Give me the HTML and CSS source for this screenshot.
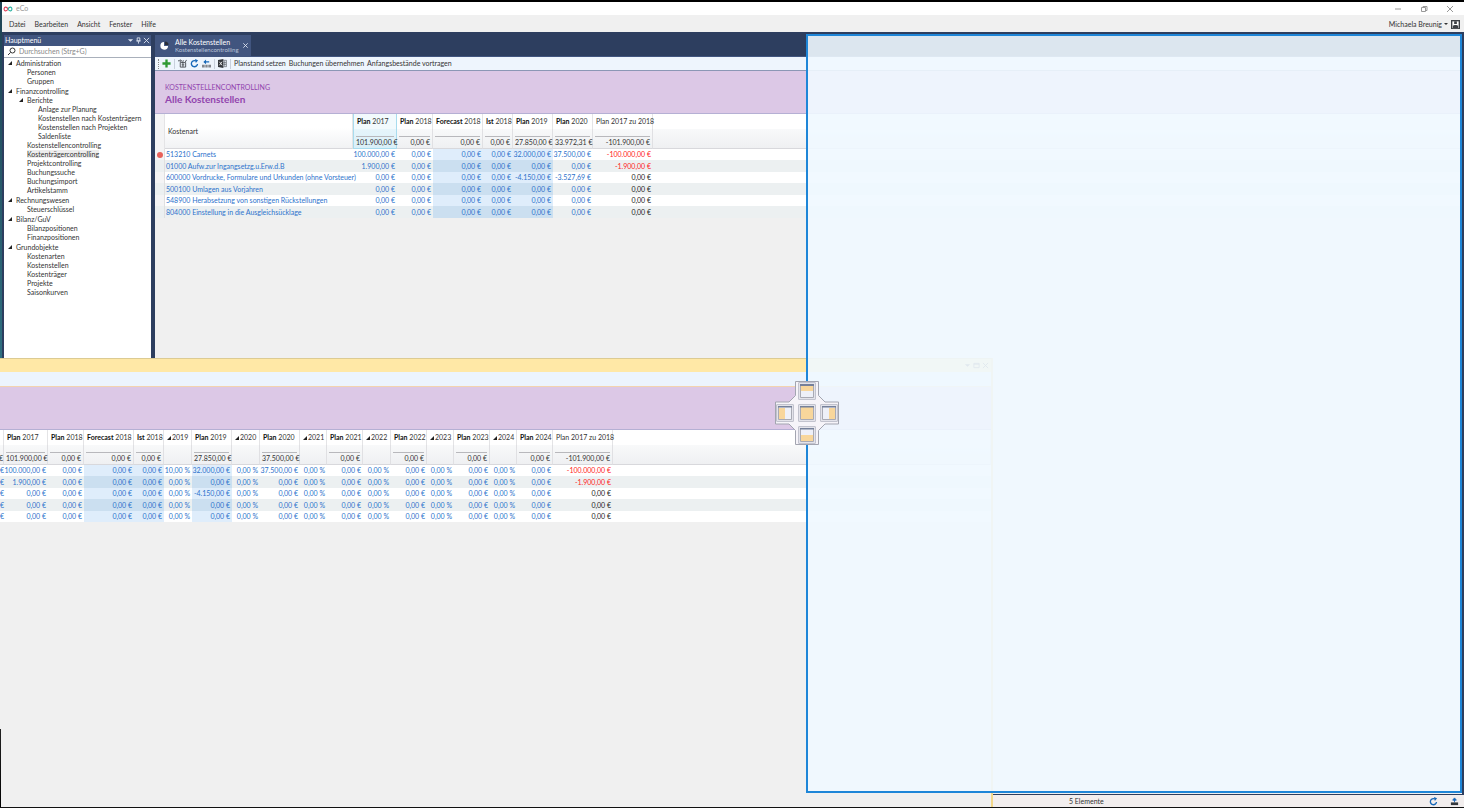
FILE: index.html
```html
<!DOCTYPE html>
<html lang="de">
<head>
<meta charset="utf-8">
<title>eCo</title>
<link rel="stylesheet" href="styles.css">
</head>
<body>
<div class="desktop">
<div class="app">
  <header class="titlebar">
    <svg class="logo" viewBox="0 0 18 10"><path d="M9 5C7 1 2 0 2 5s5 4 7 0" fill="none" stroke="#e0405a" stroke-width="2"/><path d="M9 5c2-4 7-5 7 0s-5 4-7 0" fill="none" stroke="#2bb3a3" stroke-width="2"/></svg>
    <span class="app-name">eCo</span>
    <div class="window-buttons">
      <button aria-label="Minimieren"><svg viewBox="0 0 8 8"><path d="M1 4h6"/></svg></button>
      <button aria-label="Wiederherstellen"><svg viewBox="0 0 8 8"><path d="M1.500 2.500h4v4h-4zM3 2.500v-1h4v4h-1.500"/></svg></button>
      <button aria-label="Schließen"><svg viewBox="0 0 8 8"><path d="M1 1l6 6M7 1l-6 6"/></svg></button>
    </div>
  </header>
  <nav class="menubar">
    <button>Datei</button><button>Bearbeiten</button><button>Ansicht</button><button>Fenster</button><button>Hilfe</button>
    <button class="user">Michaela Breunig <i class="caret"></i></button>
    <svg class="avatar" viewBox="0 0 10 10"><path d="M0 0h10v10H0z" fill="#3c3f44"/><path d="M1.500 9V1.500h7V9z" fill="#fff"/><path d="M3.500 1.500h3v3h-3zM2 9V6.500l2-1h2l2 1V9z" fill="#3c3f44"/></svg>
  </nav>
  <div class="workspace">
    <aside class="sidebar">
      <div class="panel-head"><span>Hauptmenü</span>
        <button aria-label="Optionen"><svg viewBox="0 0 8 8"><path d="M1 2.500h6L4 5.500z" fill="#dfe6f2" stroke="none"/></svg></button>
        <button aria-label="Anheften"><svg viewBox="0 0 8 8"><path d="M2.500 1h3v3.500h-3zM1.500 4.500h5M4 5v2.500"/></svg></button>
        <button aria-label="Schließen"><svg viewBox="0 0 8 8"><path d="M1 1l6 6M7 1l-6 6"/></svg></button>
      </div>
      <label class="search"><svg viewBox="0 0 9 9"><circle cx="5.500" cy="3.500" r="2.500"/><path d="M3.500 5.500L1 8"/></svg><input type="text" placeholder="Durchsuchen (Strg+G)" aria-label="Durchsuchen"></label>
      <ul class="tree">
        <li><span class="open">Administration</span><ul><li>Personen</li><li>Gruppen</li></ul></li>
        <li><span class="open">Finanzcontrolling</span><ul>
          <li><span class="open">Berichte</span><ul><li>Anlage zur Planung</li><li>Kostenstellen nach Kostenträgern</li><li>Kostenstellen nach Projekten</li><li>Saldenliste</li></ul></li>
          <li>Kostenstellencontrolling</li><li><span class="selected">Kostenträgercontrolling</span></li><li>Projektcontrolling</li><li>Buchungssuche</li><li>Buchungsimport</li><li>Artikelstamm</li></ul></li>
        <li><span class="open">Rechnungswesen</span><ul><li>Steuerschlüssel</li></ul></li>
        <li><span class="open">Bilanz/GuV</span><ul><li>Bilanzpositionen</li><li>Finanzpositionen</li></ul></li>
        <li><span class="open">Grundobjekte</span><ul><li>Kostenarten</li><li>Kostenstellen</li><li>Kostenträger</li><li>Projekte</li><li>Saisonkurven</li></ul></li>
      </ul>
    </aside>
    <main class="document">
      <div class="tabs">
        <div class="tab">
          <svg class="pie" viewBox="0 0 10 10"><path d="M4.500 1A4.300 4.300 0 1 0 9 5.500H4.500z" fill="#fff"/><path d="M5.500 .500A4 4 0 0 1 9.500 4.500h-4z" fill="#2b2f38"/></svg>
          <div class="tab-text"><strong>Alle Kostenstellen</strong><span>Kostenstellencontrolling</span></div>
          <button aria-label="Tab schließen"><svg viewBox="0 0 8 8"><path d="M1.500 1.500l5 5M6.500 1.500l-5 5"/></svg></button>
        </div>
      </div>
      <div class="toolbar">
        <i class="grip"></i>
        <button aria-label="Neu"><svg viewBox="0 0 10 10"><path d="M5 .500v9M.500 5h9" stroke="#2f9a35" stroke-width="2.600"/></svg></button>
        <i class="sep"></i>
        <button aria-label="Objekte"><svg viewBox="0 0 10 10"><path d="M2.500 4h6v5h-6zM0 2h3.500M2.500 .500l1.500 1.500-1.500 1.500M5 4l1-2.500M9.500 1L8 3.500M4 6.500h3M5.500 4v5" fill="none" stroke="#45494f"/></svg></button>
        <button aria-label="Aktualisieren"><svg viewBox="0 0 10 10"><path d="M8.300 5.500A3.400 3.400 0 1 1 6.500 2.200" fill="none" stroke="#1768b8" stroke-width="1.500"/><path d="M5.500 0l3.500 1.500L6.500 4.500z" fill="#1768b8"/></svg></button>
        <button aria-label="Vortragen"><svg viewBox="0 0 10 10"><path d="M4 2.500h4v1.500H4zM1.500 3.200L4.500 .500v5.200z" fill="#1768b8"/><path d="M0 6.500h3v3H0zM3.700 6.500h2.600v3H3.700zM7 6.500h3v3H7z" fill="#82868d"/></svg></button>
        <i class="sep"></i>
        <button aria-label="Excel-Export"><svg viewBox="0 0 10 10"><path d="M0 1l6-1v10L0 9z" fill="#34383d"/><path d="M6 1.500h3.500v7H6M7.500 2v6M6 4h3M6 6h3" fill="none" stroke="#555a60" stroke-width=".700"/><path d="M1.500 3l3 4M4.500 3l-3 4" stroke="#fff" stroke-width=".900"/></svg></button>
        <i class="sep"></i>
        <button>Planstand setzen</button><button>Buchungen übernehmen</button><button>Anfangsbestände vortragen</button>
      </div>
      <div class="banner"><p>KOSTENSTELLENCONTROLLING</p><h1>Alle Kostenstellen</h1></div>
      <table class="grid">
        <colgroup><col class="w-mark"><col class="w-name"><col class="w-total"><col class="w-plan"><col class="w-fore"><col class="w-ist"><col class="w-mid"><col class="w-mid"><col class="w-diff"><col></colgroup>
        <thead>
          <tr class="labels"><th class="mark" rowspan="2"></th><th class="name" rowspan="2">Kostenart</th><th class="sorted"><b>Plan</b> 2017</th><th><b>Plan</b> 2018</th><th><b>Forecast</b> 2018</th><th><b>Ist</b> 2018</th><th><b>Plan</b> 2019</th><th><b>Plan</b> 2020</th><th>Plan 2017 zu 2018</th><th></th></tr>
          <tr class="sums"><td class="sorted"><span>101.900,00 €</span></td><td><span>0,00 €</span></td><td><span>0,00 €</span></td><td><span>0,00 €</span></td><td><span>27.850,00 €</span></td><td><span>33.972,31 €</span></td><td><span>-101.900,00 €</span></td><td></td></tr>
        </thead>
        <tbody>
          <tr><td class="mark"><i class="dot"></i></td><td class="name">513210 Carnets</td><td>100.000,00 €</td><td>0,00 €</td><td class="hl">0,00 €</td><td class="hl">0,00 €</td><td class="hl">32.000,00 €</td><td>37.500,00 €</td><td class="neg">-100.000,00 €</td><td></td></tr>
          <tr><td class="mark"></td><td class="name">01000 Aufw.zur Ingangsetzg.u.Erw.d.B</td><td>1.900,00 €</td><td>0,00 €</td><td class="hl">0,00 €</td><td class="hl">0,00 €</td><td class="hl">0,00 €</td><td>0,00 €</td><td class="neg">-1.900,00 €</td><td></td></tr>
          <tr><td class="mark"></td><td class="name">600000 Vordrucke, Formulare und Urkunden (ohne Vorsteuer)</td><td>0,00 €</td><td>0,00 €</td><td class="hl">0,00 €</td><td class="hl">0,00 €</td><td class="hl">-4.150,00 €</td><td>-3.527,69 €</td><td class="zero">0,00 €</td><td></td></tr>
          <tr><td class="mark"></td><td class="name">500100 Umlagen aus Vorjahren</td><td>0,00 €</td><td>0,00 €</td><td class="hl">0,00 €</td><td class="hl">0,00 €</td><td class="hl">0,00 €</td><td>0,00 €</td><td class="zero">0,00 €</td><td></td></tr>
          <tr><td class="mark"></td><td class="name">548900 Herabsetzung von sonstigen Rückstellungen</td><td>0,00 €</td><td>0,00 €</td><td class="hl">0,00 €</td><td class="hl">0,00 €</td><td class="hl">0,00 €</td><td>0,00 €</td><td class="zero">0,00 €</td><td></td></tr>
          <tr><td class="mark"></td><td class="name">804000 Einstellung in die Ausgleichsücklage</td><td>0,00 €</td><td>0,00 €</td><td class="hl">0,00 €</td><td class="hl">0,00 €</td><td class="hl">0,00 €</td><td>0,00 €</td><td class="zero">0,00 €</td><td></td></tr>
        </tbody>
      </table>
    </main>
  </div>
  <footer class="statusbar"><span>5 Elemente</span>
    <button aria-label="Aktualisieren"><svg viewBox="0 0 10 10"><path d="M8.300 5.500A3.400 3.400 0 1 1 6.500 2.200" fill="none" stroke="#1768b8" stroke-width="1.500"/><path d="M5.500 0l3.500 1.500L6.500 4.500z" fill="#1768b8"/></svg></button>
    <button aria-label="Server"><svg viewBox="0 0 10 10"><path d="M5 6V3M3 3.500L5 1l2 2.500z" fill="#1768b8" stroke="#1768b8"/><path d="M1 6h8v3H1z" fill="#34383d"/></svg></button>
  </footer>
</div>

<section class="floating">
  <div class="float-title">
    <button aria-label="Optionen"><svg viewBox="0 0 8 8"><path d="M1 2.500h6L4 5.500z" fill="#555" stroke="none"/></svg></button>
    <button aria-label="Maximieren"><svg viewBox="0 0 8 8"><path d="M1 1.500h6v5H1zM1 2.500h6"/></svg></button>
    <button aria-label="Schließen"><svg viewBox="0 0 8 8"><path d="M1 1l6 6M7 1l-6 6"/></svg></button>
  </div>
  <div class="float-toolbar"></div>
  <div class="float-banner"></div>
  <table class="grid">
    <colgroup><col class="w-cut"><col class="w-total"><col class="w-plan"><col class="w-fore"><col class="w-ist"><col class="w-pct"><col class="w-mid"><col class="w-pct"><col class="w-mid"><col class="w-narrow"><col class="w-plan"><col class="w-pct"><col class="w-plan"><col class="w-narrow"><col class="w-plan"><col class="w-narrow"><col class="w-plan"><col class="w-diff"><col></colgroup>
    <thead>
      <tr class="labels"><th></th><th><b>Plan</b> 2017</th><th><b>Plan</b> 2018</th><th><b>Forecast</b> 2018</th><th><b>Ist</b> 2018</th><th><i class="delta"></i>2019</th><th><b>Plan</b> 2019</th><th><i class="delta"></i>2020</th><th><b>Plan</b> 2020</th><th><i class="delta"></i>2021</th><th><b>Plan</b> 2021</th><th><i class="delta"></i>2022</th><th><b>Plan</b> 2022</th><th><i class="delta"></i>2023</th><th><b>Plan</b> 2023</th><th><i class="delta"></i>2024</th><th><b>Plan</b> 2024</th><th>Plan 2017 zu 2018</th><th></th></tr>
      <tr class="sums"><td class="cut">€</td><td><span>101.900,00 €</span></td><td><span>0,00 €</span></td><td><span>0,00 €</span></td><td><span>0,00 €</span></td><td></td><td><span>27.850,00 €</span></td><td></td><td><span>37.500,00 €</span></td><td></td><td><span>0,00 €</span></td><td></td><td><span>0,00 €</span></td><td></td><td><span>0,00 €</span></td><td></td><td><span>0,00 €</span></td><td><span>-101.900,00 €</span></td><td></td></tr>
    </thead>
    <tbody>
      <tr><td class="cut">€</td><td>100.000,00 €</td><td>0,00 €</td><td class="hl">0,00 €</td><td class="hl">0,00 €</td><td>10,00 %</td><td class="hl">32.000,00 €</td><td>0,00 %</td><td>37.500,00 €</td><td>0,00 %</td><td>0,00 €</td><td>0,00 %</td><td>0,00 €</td><td>0,00 %</td><td>0,00 €</td><td>0,00 %</td><td>0,00 €</td><td class="neg">-100.000,00 €</td><td></td></tr>
      <tr><td class="cut">€</td><td>1.900,00 €</td><td>0,00 €</td><td class="hl">0,00 €</td><td class="hl">0,00 €</td><td>0,00 %</td><td class="hl">0,00 €</td><td>0,00 %</td><td>0,00 €</td><td>0,00 %</td><td>0,00 €</td><td>0,00 %</td><td>0,00 €</td><td>0,00 %</td><td>0,00 €</td><td>0,00 %</td><td>0,00 €</td><td class="neg">-1.900,00 €</td><td></td></tr>
      <tr><td class="cut">€</td><td>0,00 €</td><td>0,00 €</td><td class="hl">0,00 €</td><td class="hl">0,00 €</td><td>0,00 %</td><td class="hl">-4.150,00 €</td><td>0,00 %</td><td>0,00 €</td><td>0,00 %</td><td>0,00 €</td><td>0,00 %</td><td>0,00 €</td><td>0,00 %</td><td>0,00 €</td><td>0,00 %</td><td>0,00 €</td><td class="zero">0,00 €</td><td></td></tr>
      <tr><td class="cut">€</td><td>0,00 €</td><td>0,00 €</td><td class="hl">0,00 €</td><td class="hl">0,00 €</td><td>0,00 %</td><td class="hl">0,00 €</td><td>0,00 %</td><td>0,00 €</td><td>0,00 %</td><td>0,00 €</td><td>0,00 %</td><td>0,00 €</td><td>0,00 %</td><td>0,00 €</td><td>0,00 %</td><td>0,00 €</td><td class="zero">0,00 €</td><td></td></tr>
      <tr><td class="cut">€</td><td>0,00 €</td><td>0,00 €</td><td class="hl">0,00 €</td><td class="hl">0,00 €</td><td>0,00 %</td><td class="hl">0,00 €</td><td>0,00 %</td><td>0,00 €</td><td>0,00 %</td><td>0,00 €</td><td>0,00 %</td><td>0,00 €</td><td>0,00 %</td><td>0,00 €</td><td>0,00 %</td><td>0,00 €</td><td class="zero">0,00 €</td><td></td></tr>
    </tbody>
  </table>
</section>

<div class="drop-preview"></div>
<div class="compass">
  <svg class="cross" viewBox="0 0 64 64"><path d="M20.500 .500h23v14l6.500 6.500h13.500v22H50l-6.500 6.500v14h-23v-14L14 43H.500V21H14l6.500-6.500z" fill="#f6f4f9" stroke="#a3a5b0"/></svg>
  <button class="top" aria-label="Oben andocken"><svg viewBox="0 0 14 14"><path class="pane" d="M.500 .500h13v13H.500z"/><path class="fill" d="M1 2h12v5H1z"/><path class="bar" d="M0 0h14v2H0z"/></svg></button>
  <button class="left" aria-label="Links andocken"><svg viewBox="0 0 14 14"><path class="pane" d="M.500 .500h13v13H.500z"/><path class="fill" d="M1 2h6v11H1z"/><path class="bar" d="M0 0h14v1.500H0z"/></svg></button>
  <button class="mid" aria-label="Als Tab andocken"><svg viewBox="0 0 14 14"><path class="pane" d="M.500 .500h13v13H.500z"/><path class="fill" d="M1 1h12v12H1z"/><path class="bar" d="M0 0h14v1.500H0z"/></svg></button>
  <button class="right" aria-label="Rechts andocken"><svg viewBox="0 0 14 14"><path class="pane" d="M.500 .500h13v13H.500z"/><path class="fill" d="M7 2h6v11H7z"/><path class="bar" d="M0 0h14v1.500H0z"/></svg></button>
  <button class="bottom" aria-label="Unten andocken"><svg viewBox="0 0 14 14"><path class="pane" d="M.500 .500h13v13H.500z"/><path class="fill" d="M1 7h12v6H1z"/><path class="bar" d="M0 0h14v1.500H0z"/></svg></button>
</div>
</div>
</body>
</html>
```
FILE: styles.css
```css
* { box-sizing: border-box; }
body { margin: 0; font: 7px/9px Lato, "Open Sans", sans-serif; color: #333; }
button { display: flex; align-items: center; margin: 0; padding: 0; border: 0; background: none; font: inherit; color: inherit; white-space: nowrap; }
svg { display: block; }
ul { margin: 0; padding: 0; list-style: none; }

.desktop { position: relative; height: 100vh; padding: 2px 0 1px 2px; overflow: hidden; background: linear-gradient(#000 2px, #1f4354 2px, #2f6f80 358px, #111 100%); }
.app { display: flex; flex-direction: column; height: 100%; background: #2d3e5f; }

.titlebar { display: flex; align-items: center; height: 13px; background: #fff; color: #999; }
.logo { width: 10px; height: 6px; margin: 0 3px 0 1px; }
.window-buttons { display: flex; gap: 18px; margin-left: auto; padding-right: 10px; }
.window-buttons svg { width: 8px; height: 8px; fill: none; stroke: #999; stroke-width: 1; }

.menubar { display: flex; align-items: center; gap: 9px; height: 17px; padding: 1px 4px 0 7px; background: #f0f0f0; }
.user { gap: 2px; margin-left: auto; }
.caret { border: 2px solid transparent; border-top-color: #333; border-bottom: 0; }
.avatar { width: 9px; height: 9px; margin-left: -6px; }

.workspace { display: flex; flex: 1; min-height: 0; padding: 3px 2px 1px; gap: 4px; }
.sidebar { display: flex; flex-direction: column; width: 147px; background: #fff; }
.panel-head { display: flex; align-items: center; gap: 1px; height: 11px; padding: 0 1px; background: #41557f; color: #fff; }
.panel-head span { flex: 1; }
.panel-head svg, .tab button svg { width: 7px; height: 7px; fill: none; stroke: #dfe6f2; }
.search { display: flex; align-items: center; gap: 3px; height: 12px; padding: 0 3px; border-bottom: 1px solid #a9b0bb; }
.search svg { width: 9px; height: 9px; fill: none; stroke: #333; }
.search input { flex: 1; min-width: 0; padding: 0; border: 0; outline: 0; font: inherit; }
.search input::placeholder { color: #888; }
.tree { padding: 1px 0 0 12px; }
.tree > li { margin-bottom: 1px; }
.tree ul { padding-left: 11px; }
.open { position: relative; }
.open::before { content: ""; position: absolute; left: -8px; top: 2px; border: 2px solid transparent; border-right-color: #222; border-bottom-color: #222; }
.selected { background: #ededed; }

.document { display: flex; flex-direction: column; flex: 1; min-width: 0; background: #f0f0f0; }
.tabs { display: flex; height: 21px; background: #2d3e5f; }
.tab { display: flex; align-items: center; width: 96px; padding: 0 2px 0 5px; background: #41557f; color: #fff; }
.pie { width: 9px; height: 9px; margin-right: 6px; }
.tab-text { flex: 1; display: flex; flex-direction: column; line-height: 8px; }
.tab-text strong { font-weight: 400; }
.tab-text span { font-size: 6px; color: #b9c4d9; }
.toolbar { display: flex; align-items: center; gap: 3px; height: 15px; padding: 0 3px; background: #eef5fd; border-top: 1px solid #41557f; border-bottom: 1px solid #8b97b5; }
.toolbar svg, .statusbar svg { width: 9px; height: 9px; }
.grip { height: 10px; border-left: 1px dotted #888; }
.sep { height: 10px; border-left: 1px solid #c8d0dc; }
.banner { height: 43px; padding: 12px 10px 0; background: #dcc8e6; border-bottom: 1px solid #b5b0d4; color: #9245ae; }
.banner p { margin: 0; }
.banner h1 { margin: 0; font-size: 10px; line-height: 14px; font-weight: 700; }

.grid { width: 100%; table-layout: fixed; border-spacing: 0; background: #fff; text-align: right; }
.grid td, .grid th { padding: 0 2px 0 0; height: 11px; line-height: 11px; font-weight: 400; white-space: nowrap; }
.w-mark { width: 10px; } .w-name { width: 188px; } .w-total { width: 44px; } .w-plan { width: 36px; }
.w-fore { width: 50px; } .w-ist { width: 30px; } .w-mid { width: 40px; } .w-diff { width: 60px; }
.w-pct { width: 28px; } .w-narrow { width: 27px; } .w-cut { width: 4px; }
.grid .labels th { height: 15px; text-align: left; padding: 0 0 0 3px; border-right: 1px solid #e4e4e6; }
.grid .sums td { height: 20px; padding: 0 2px; vertical-align: bottom; border-right: 1px solid #e0e0e3; border-bottom: 1px solid #d8d8dc; background: linear-gradient(#f8f9fa, #eff0f2); }
.sums span { display: block; border-top: 1px solid #b8b8bc; }
.grid .labels .name { vertical-align: middle; background: linear-gradient(#fff 40%, #f1f2f4); border-bottom: 1px solid #d8d8dc; }
.grid .labels .sorted { background: #f2fafd; border-color: #a8dcee; border-left: 1px solid #a8dcee; }
.grid .sums .sorted { background: linear-gradient(#e6f5fb, #d9eff8); border-color: #a8dcee; border-left: 1px solid #a8dcee; }
.grid b { font-weight: 700; color: #111; }
.grid tbody { color: #2c72cc; }
.grid tbody tr:nth-child(even) td { height: 12px; background: #ecf0f1; }
.grid tbody .hl { background: #dfedfb; }
.grid tbody tr:nth-child(even) .hl { background: #cbdff0; }
.grid tbody .neg { color: #f22; }
.grid tbody .zero { color: #222; }
.grid tbody .name { text-align: left; padding-left: 1px; }
.grid .mark { background: #f4f4f5; border-right: 1px solid #e0e0e0; padding: 0 2px; }
.grid .cut { padding: 0; border-right: 0; direction: rtl; }
.dot { display: block; width: 6px; height: 6px; border-radius: 50%; background: #e8625a; }
.delta { display: inline-block; margin: 0 1px 0 0; border: 2px solid transparent; border-right-color: #222; border-bottom-color: #222; }

.statusbar { display: flex; align-items: center; gap: 12px; height: 12px; padding: 0 5px 0 1067px; background: #f2eeee; }
.statusbar span { flex: 1; }

.floating { position: absolute; left: 0; top: 358px; bottom: 1px; width: 993px; background: linear-gradient(#222, #000) left bottom / 1px 78px no-repeat #f0f0f0; border-top: 1px solid #dccb93; border-right: 2px solid #f3d88a; }
.float-title { display: flex; justify-content: flex-end; align-items: center; gap: 2px; height: 13px; padding-right: 2px; background: #ffe8a6; }
.float-title svg { width: 7px; height: 7px; fill: none; stroke: #555; }
.float-toolbar { height: 15px; background: #ecf4fd; border-bottom: 1px solid #f3d3b0; }
.float-banner { height: 43px; background: #dcc8e6; border-bottom: 1px solid #b5b0d4; }

.drop-preview { position: absolute; left: 806px; right: 2px; top: 34px; bottom: 15px; background: rgba(240, 248, 255, .9); border: 2px solid #1e86d8; }
.compass { position: absolute; left: 775px; top: 381px; display: grid; grid-template-columns: repeat(3, 18px); gap: 4px; padding: 1px; grid-template-areas: ". t ." "l m r" ". b ."; }
.cross { position: absolute; inset: 0; width: 64px; height: 64px; }
.compass button { position: relative; justify-content: center; width: 18px; height: 18px; background: #e3e3ea; border: 1px solid #c2c3ce; border-radius: 1px; }
.compass button svg { width: 14px; height: 14px; }
.top { grid-area: t; } .left { grid-area: l; } .mid { grid-area: m; } .right { grid-area: r; } .bottom { grid-area: b; }
.pane { fill: #eef0f8; stroke: #a9aab4; }
.fill { fill: #f8d69b; }
.bar { fill: #75809a; }
```
